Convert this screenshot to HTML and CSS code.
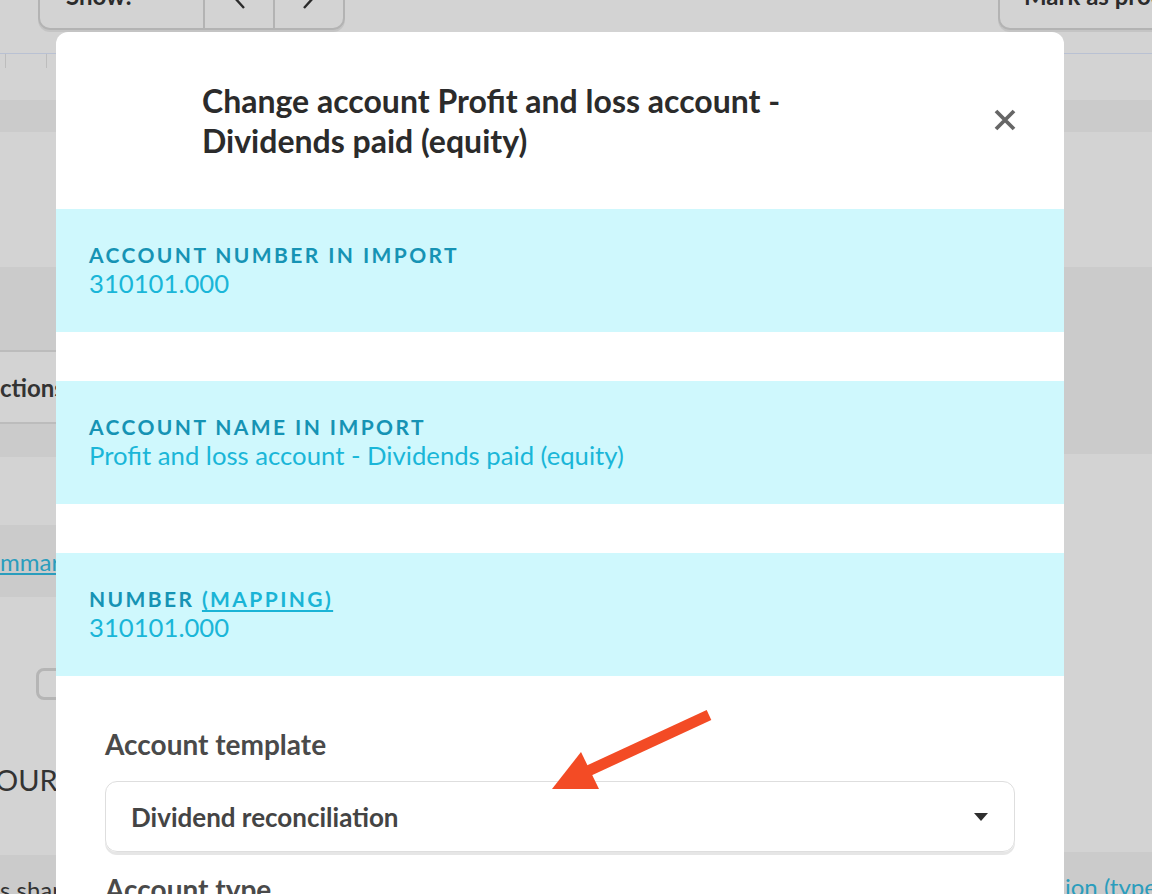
FILE: index.html
```html
<!DOCTYPE html>
<html lang="en">
<head>
<meta charset="utf-8">
<title>Change account</title>
<link rel="stylesheet" href="styles.css">
</head>
<body>
<div class="page">
  <div class="toolbar">
    <div class="btn-group">
      <span class="seg seg-show">Show:</span>
      <span class="seg seg-nav">
        <svg width="14" height="26" viewBox="0 0 14 26"><path d="M12 2L2 13L12 24" fill="none" stroke="#2b2b2b" stroke-width="2.4"/></svg>
      </span>
      <span class="seg seg-nav">
        <svg width="14" height="26" viewBox="0 0 14 26"><path d="M2 2L12 13L2 24" fill="none" stroke="#2b2b2b" stroke-width="2.4"/></svg>
      </span>
    </div>
    <div class="btn-single">Mark as processed</div>
  </div>
  <div class="tabs">
    <span class="tick"></span>
    <span class="tick"></span>
  </div>
  <div class="band dark h32"></div>
  <div class="band light h135"></div>
  <div class="columns">
    <div class="col-left">
      <div class="band dark h83 ruled"></div>
      <div class="band light row-title ruled"><span class="row-text">ctions overview</span></div>
      <div class="band dark h33"></div>
      <div class="band light h68"></div>
      <div class="band dark row-link"><a class="bg-link" href="#">mmary</a></div>
      <div class="band light row-main">
        <span class="checkbox"></span>
        <span class="big-text">OUR</span>
      </div>
      <div class="band dark row-foot"><span class="foot-text">s shares</span></div>
    </div>
    <div class="col-right">
      <div class="band dark h187"></div>
      <div class="band light h398"></div>
      <div class="band dark row-foot right-foot"><a class="bg-link" href="#">ion (type)</a></div>
    </div>
  </div>
</div>

<div class="modal" role="dialog" aria-labelledby="modal-title">
  <div class="modal-header">
    <h2 id="modal-title" class="modal-title">Change account Profit and loss account - Dividends paid (equity)</h2>
    <button class="close" aria-label="Close">
      <svg width="22" height="22" viewBox="0 0 22 22"><path d="M2 2L20 20M20 2L2 20" stroke="#666" stroke-width="3.8" stroke-linecap="butt"/></svg>
    </button>
  </div>

  <div class="info">
    <div class="info-label">Account number in import</div>
    <div class="info-value">310101.000</div>
  </div>
  <div class="info">
    <div class="info-label">Account name in import</div>
    <div class="info-value">Profit and loss account - Dividends paid (equity)</div>
  </div>
  <div class="info">
    <div class="info-label">Number <a class="info-link" href="#">(Mapping)</a></div>
    <div class="info-value">310101.000</div>
  </div>

  <div class="modal-body">
    <label class="field-label">Account template</label>
    <div class="select">
      <span class="select-value">Dividend reconciliation</span>
      <svg class="caret" width="14" height="8" viewBox="0 0 14 8"><path d="M0 0H14L7 8Z" fill="#2e2e2e"/></svg>
    </div>
    <label class="field-label second">Account type</label>
  </div>
</div>

<svg class="pointer" width="1152" height="894" viewBox="0 0 1152 894">
  <line x1="709" y1="715" x2="588" y2="771" stroke="#f34b25" stroke-width="11"/>
  <polygon points="581,752 552,789 599,789" fill="#f34b25"/>
</svg>
</body>
</html>
```

FILE: styles.css
```css
* { box-sizing: border-box; }

html, body {
  margin: 0;
  height: 894px;
  overflow: hidden;
}

body {
  font-family: Lato, "Open Sans", sans-serif;
  background: #d3d3d3;
  color: #2b2b2b;
}

/* ---- dimmed page behind the dialog ---- */
.page { width: 1152px; }

.toolbar {
  height: 54px;
  display: flex;
  justify-content: space-between;
  padding-left: 38px;
  border-bottom: 1px solid #b9c1d3;
}

.btn-group {
  display: flex;
  height: 52px;
  margin-top: -22px;
  border: 2px solid #b3b3b3;
  border-radius: 12px;
  box-shadow: 0 2px 0 #c4c4c4;
}

.seg {
  display: flex;
  align-items: flex-start;
  justify-content: center;
  font-weight: 700;
  font-size: 24px;
  line-height: 1;
  color: #2b2b2b;
  padding-top: 4px;
}
.seg + .seg { border-left: 2px solid #b3b3b3; }
.seg-show { width: 163px; justify-content: flex-start; padding-left: 26px; }
.seg-nav { width: 70px; padding-top: 4px; }
.seg-nav svg { display: block; }

.btn-single {
  height: 52px;
  margin-top: -22px;
  width: 154px;
  padding: 4px 0 0 24px;
  border: 2px solid #b3b3b3;
  border-right: 0;
  border-radius: 12px 0 0 12px;
  box-shadow: 0 2px 0 #c4c4c4;
  font-weight: 700;
  font-size: 24px;
  line-height: 1;
  white-space: nowrap;
  overflow: hidden;
}

.tabs {
  height: 46px;
  display: flex;
  gap: 40px;
  padding-left: 5px;
}
.tick { width: 1px; height: 14px; background: #bdbdbd; }

.band { width: 100%; }
.light { background: #d3d3d3; }
.dark { background: #cbcbcb; }
.ruled { border-bottom: 2px solid #bcbcbc; }

.h32 { height: 32px; }
.h33 { height: 33px; }
.h68 { height: 68px; }
.h83 { height: 85px; }
.h135 { height: 135px; }
.h187 { height: 187px; }
.h398 { height: 398px; }

.columns {
  display: grid;
  grid-template-columns: 600px 552px;
}

.row-title {
  height: 72px;
  display: flex;
  align-items: center;
}
.row-text {
  font-weight: 700;
  font-size: 24px;
  color: #333;
  white-space: nowrap;
}

.row-link {
  height: 72px;
  display: flex;
  align-items: center;
}
.bg-link {
  color: #2a9dbd;
  font-size: 24px;
  text-decoration: underline;
  white-space: nowrap;
}

.row-main {
  height: 258px;
  display: flex;
  flex-direction: column;
  align-items: flex-start;
}
.checkbox {
  display: block;
  width: 34px;
  height: 32px;
  margin: 71px 0 0 36px;
  border: 3px solid #b5b5b5;
  border-radius: 8px;
}
.big-text {
  margin: 60px 0 0 -5px;
  font-size: 29px;
  line-height: 40px;
  color: #333;
}

.row-foot {
  height: 60px;
  padding-top: 20px;
}
.right-foot { padding-left: 465px; }
.foot-text {
  font-size: 24px;
  color: #333;
  white-space: nowrap;
}

/* ---- dialog ---- */
.modal {
  position: absolute;
  left: 56px;
  top: 32px;
  width: 1008px;
  height: 940px;
  background: #fff;
  border-radius: 12px;
}

.modal-header {
  position: relative;
  padding: 49px 120px 48px 146px;
}
.modal-title {
  margin: 0;
  max-width: 640px;
  font-size: 32px;
  line-height: 40px;
  font-weight: 700;
  color: #2b2b2b;
}
.close {
  position: absolute;
  right: 48px;
  top: 77px;
  padding: 0;
  border: 0;
  background: none;
  width: 22px;
  height: 22px;
}
.close svg { display: block; }

.info {
  height: 123px;
  padding: 33px 33px 0;
  background: #cff8fd;
}
.info + .info { margin-top: 49px; }

.info-label {
  font-size: 21px;
  line-height: 25px;
  font-weight: 700;
  letter-spacing: 2.4px;
  text-transform: uppercase;
  color: #1693b4;
}
.info-link {
  color: #1ab4d6;
  text-decoration: underline;
  text-underline-offset: 3px;
}
.info-value {
  margin-top: 1px;
  font-size: 25.7px;
  line-height: 30px;
  color: #1ab6d8;
}

.modal-body {
  padding: 53px 49px 0;
}
.field-label {
  display: block;
  font-size: 28px;
  line-height: 30px;
  font-weight: 700;
  color: #4a4a4a;
}
.field-label.second { margin-top: 22px; }

.select {
  margin-top: 22px;
  height: 71px;
  display: flex;
  align-items: center;
  justify-content: space-between;
  padding: 0 26px 0 25px;
  border: 1px solid #dedede;
  border-radius: 12px;
  box-shadow: 0 3px 0 #e6e6e6;
}
.select-value {
  font-size: 26px;
  font-weight: 700;
  color: #444;
}
.caret { display: block; }

.pointer {
  position: absolute;
  left: 0;
  top: 0;
  pointer-events: none;
}
```
